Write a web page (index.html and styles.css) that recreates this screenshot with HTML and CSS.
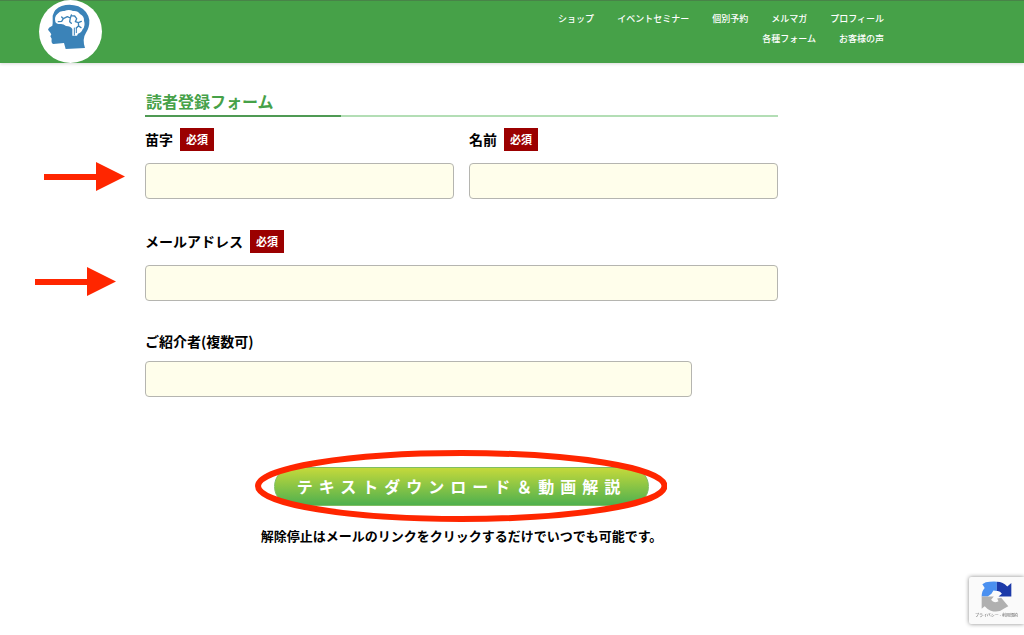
FILE: index.html
```html
<!DOCTYPE html>
<html lang="ja">
<head>
<meta charset="utf-8">
<meta name="viewport" content="width=device-width, initial-scale=1">
<title>読者登録フォーム</title>
<link rel="stylesheet" href="styles.css">
</head>
<body>
<header class="site-header">
  <a class="logo" href="#" aria-label="ホーム">
    <svg class="logo-art" viewBox="117 0 189 189" aria-hidden="true">
      <path fill="#3b83b8" d="M158 70V47Q164 25 185 18Q210 10 235 19Q263 32 268 60Q269 82 258 98Q246 116 255 144L197 147L192 129L160 132Q153 130 155 116L151 109L154 103L150 97L144 89L147 83L157 77Z"/>
      <path fill="#fff" d="M166 65Q162 51 172 42Q180 31 193 33Q207 27 219 33Q233 31 240 42Q253 49 252 62Q257 77 248 88Q245 98 234 101L231 107H217V87Q212 78 198 78Q190 71 181 72Q168 72 166 65Z"/>
      <g fill="none" stroke="#3b83b8" stroke-width="4" stroke-linecap="round" stroke-linejoin="round">
        <path d="M175 65L185 64L190 56L202 50L211 54L214 45M190 56L185 51M211 54L209 65L214 70M214 47L224 48L230 56L226 65L235 68L244 64M235 68L236 78L243 83M236 77L229 84"/>
        <path stroke-width="3" d="M229 84V98M223 84V105"/>
      </g>
    </svg>
  </a>
  <nav class="nav" aria-label="メイン">
    <a href="#">ショップ</a>
    <a href="#">イベントセミナー</a>
    <a href="#">個別予約</a>
    <a href="#">メルマガ</a>
    <a href="#">プロフィール</a>
    <a href="#">各種フォーム</a>
    <a href="#">お客様の声</a>
  </nav>
</header>

<main class="page">
  <h1 class="title">読者登録フォーム</h1>
  <form class="form">
    <div class="name-row">
      <div class="field">
        <label class="label" for="family">苗字<span class="badge">必須</span></label>
        <div class="control">
          <input class="input" id="family" type="text" required>
          <svg class="arrow" viewBox="0 0 81 29" aria-hidden="true"><path d="M0 12H52V0L81 14.5L52 29V18H0Z"/></svg>
        </div>
      </div>
      <div class="field">
        <label class="label" for="given">名前<span class="badge">必須</span></label>
        <input class="input" id="given" type="text" required>
      </div>
    </div>
    <div class="field">
      <label class="label" for="email">メールアドレス<span class="badge">必須</span></label>
      <div class="control">
        <input class="input" id="email" type="email" required>
        <svg class="arrow arrow-email" viewBox="0 0 81 29" aria-hidden="true"><path d="M0 12H52V0L81 14.5L52 29V18H0Z"/></svg>
      </div>
    </div>
    <div class="field field-referrer">
      <label class="label label-plain" for="referrer">ご紹介者(複数可)</label>
      <input class="input" id="referrer" type="text">
    </div>
    <div class="submit-row">
      <div class="submit-wrap">
        <button class="submit" type="submit">テキストダウンロード＆動画解説</button>
        <svg class="ring" viewBox="0 0 412 72" preserveAspectRatio="none" aria-hidden="true"><ellipse cx="206" cy="36" rx="203" ry="33"/></svg>
      </div>
      <p class="note">解除停止はメールのリンクをクリックするだけでいつでも可能です。</p>
    </div>
  </form>
</main>

<aside class="captcha">
  <svg class="captcha-logo" viewBox="46 22 92 92" aria-hidden="true">
    <path fill="#4a90f0" d="M93 24V52L83 50L77 60L66 68H48Q48 52 57 43L50 32L60 26Q76 23 93 24Z"/>
    <path fill="#1c3aa9" d="M93 24Q112 24 124 38L136 28V68H98L108 60Q102 50 93 52Z"/>
    <path fill="#b0b0b0" d="M48 68H84L76 78Q84 90 98 82L94 74L106 72L127 97L116 103Q98 118 75 110Q62 104 57 97L48 104Z"/>
  </svg>
  <p class="captcha-text"><a href="#">プライバシー</a> - <a href="#">利用規約</a></p>
</aside>
</body>
</html>
```

FILE: styles.css
```css
* {
  box-sizing: border-box;
}

body {
  margin: 0;
  background: #fff;
  color: #000;
  font-family: "Noto Sans CJK JP", sans-serif;
}

a {
  color: inherit;
  text-decoration: none;
}

.site-header {
  display: flex;
  justify-content: space-between;
  align-items: flex-start;
  min-height: 63px;
  padding: 0 140px 0 39px;
  background: #46a148;
  box-shadow: inset 0 1px #488348, 0 1px 3px rgba(0, 0, 0, 0.15);
}

.logo {
  width: 63px;
  height: 63px;
  border-radius: 50%;
  background: #fff;
}

.logo-art {
  display: block;
  width: 100%;
  height: 100%;
}

.nav {
  display: flex;
  flex-wrap: wrap;
  justify-content: flex-end;
  column-gap: 23px;
  max-width: 370px;
  padding-top: 9px;
  color: #fff;
  font-size: 9px;
  font-weight: 500;
  line-height: 20px;
}

.page {
  padding: 27px 246px 0 145px;
}

.title {
  position: relative;
  margin: 0;
  padding: 0 1px 2px;
  border-bottom: 2px solid #b3deb5;
  color: #46a148;
  font-size: 16px;
  font-weight: 700;
  line-height: 23px;
}

.title::after {
  content: "";
  position: absolute;
  left: 0;
  bottom: -2px;
  width: 31%;
  height: 2px;
  background: #4f9a54;
}

.form {
  display: flex;
  flex-direction: column;
  gap: 31px;
  padding-top: 11px;
}

.name-row {
  display: grid;
  grid-template-columns: 1fr 1fr;
  gap: 15px;
}

.label {
  display: flex;
  align-items: center;
  gap: 7px;
  margin-bottom: 12px;
  font-size: 14px;
  font-weight: 700;
  line-height: 23px;
}

.label-plain {
  margin-bottom: 8px;
}

.badge {
  padding: 0 6px;
  background: #9b0000;
  color: #fff;
  font-size: 11px;
}

.control {
  position: relative;
}

.input {
  display: block;
  width: 100%;
  height: 36px;
  padding: 0 10px;
  border: 1px solid #b5b5b0;
  border-radius: 4px;
  background: #fffeeb;
  font: inherit;
  font-size: 14px;
}

.field-referrer {
  width: 547px;
  max-width: 100%;
  margin-top: -2px;
}

.arrow {
  position: absolute;
  top: -1px;
  left: -101px;
  width: 81px;
  height: 29px;
  fill: #ff2600;
}

.arrow-email {
  top: 2px;
  left: -110px;
}

.submit-row {
  display: flex;
  flex-direction: column;
  align-items: center;
  gap: 20px;
  padding-top: 39px;
}

.submit-wrap {
  position: relative;
}

.submit {
  display: block;
  height: 39px;
  padding: 0 22px 2px;
  border: 1px solid #7fbe63;
  border-radius: 20px;
  background: linear-gradient(#c4d93b, #4fb04f);
  color: #fff;
  font: inherit;
  font-size: 16px;
  font-weight: 700;
  letter-spacing: 6px;
  white-space: nowrap;
}

.ring {
  position: absolute;
  top: -17px;
  left: -19px;
  width: calc(100% + 37px);
  height: 72px;
  fill: none;
  stroke: #ff2600;
  stroke-width: 6px;
}

.note {
  margin: 0;
  font-size: 13px;
  font-weight: 700;
  line-height: 20px;
}

.captcha {
  position: fixed;
  right: 0;
  bottom: 11px;
  width: 55px;
  height: 47px;
  padding-top: 4px;
  border-radius: 2px 0 0 2px;
  background: #fafafa;
  box-shadow: 0 0 4px #888;
  text-align: center;
}

.captcha-logo {
  display: block;
  width: 31px;
  height: 31px;
  margin: 0 auto;
}

.captcha-text {
  margin: 0;
  color: #555;
  font-size: 4px;
  line-height: 6px;
  white-space: nowrap;
}
```
